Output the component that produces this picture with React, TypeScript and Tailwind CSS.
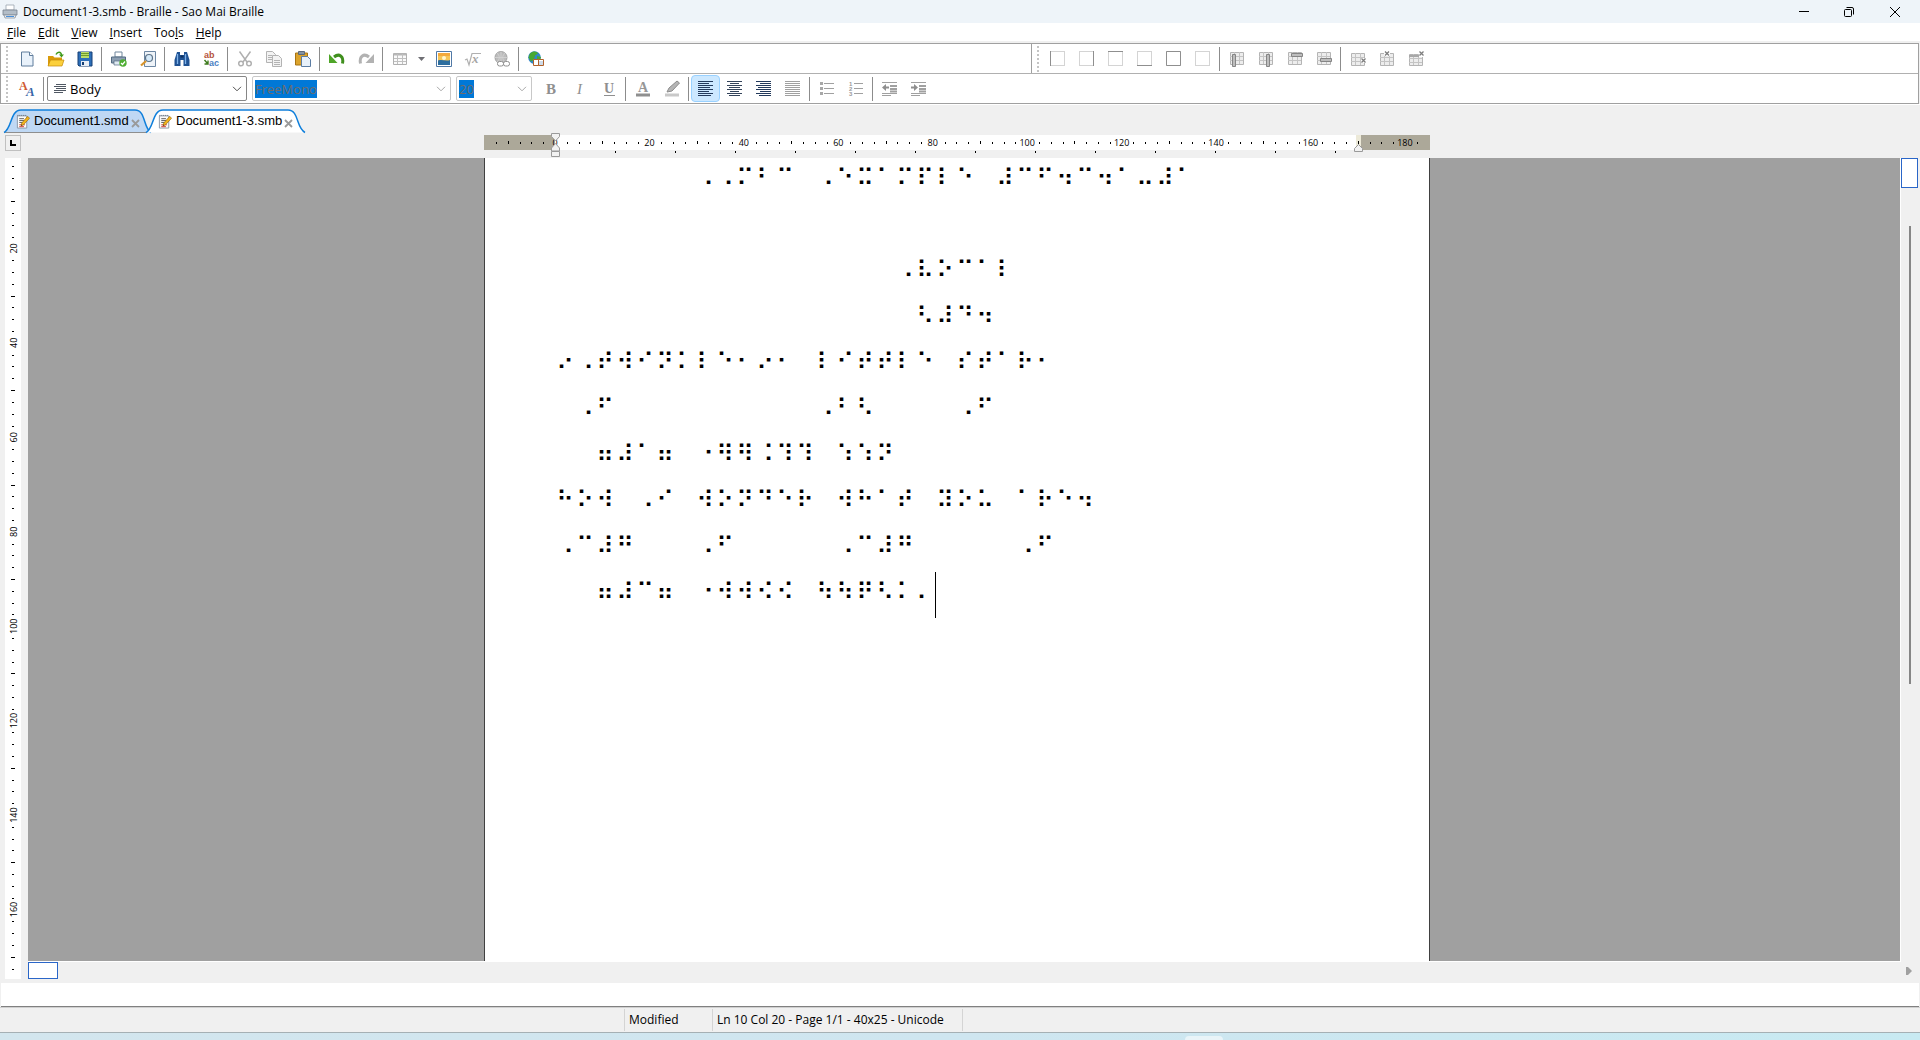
import { ReactNode } from 'react';
import { clsx } from 'clsx';

const MENUS = ['File', 'Edit', 'View', 'Insert', 'Tools', 'Help'];
const ACCESS_KEYS = [0, 0, 0, 0, 3, 0];

const BRAILLE_LINES = [
  '       ⠠⠠⠍⠃⠉ ⠠⠑⠭⠁⠍⠏⠇⠑ ⠼⠉⠋⠲⠉⠲⠁⠤⠼⠁',
  '',
  '                 ⠠⠧⠕⠉⠁⠇',
  '                  ⠣⠼⠙⠲',
  '⠔⠠⠞⠺⠊⠝⠅⠇⠑⠂⠔⠂ ⠇⠊⠞⠞⠇⠑ ⠎⠞⠁⠗⠂',
  ' ⠠⠋          ⠠⠃⠣    ⠠⠋',
  '  ⠶⠼⠁⠶ ⠐⠻⠻⠨⠹⠹ ⠱⠱⠝',
  '⠓⠕⠺ ⠠⠊ ⠺⠕⠝⠙⠑⠗ ⠺⠓⠁⠞ ⠽⠕⠥ ⠁⠗⠑⠲',
  '⠠⠉⠼⠛   ⠠⠋     ⠠⠉⠼⠛     ⠠⠋',
  '  ⠶⠼⠉⠶ ⠐⠺⠺⠪⠪ ⠳⠳⠟⠣⠅⠄',
];

function Icon({ children }: { children: ReactNode }) {
  return (
    <svg viewBox="0 0 16 16" className="size-4 overflow-visible" aria-hidden="true">
      {children}
    </svg>
  );
}

function ToolButton({
  label,
  active,
  children,
}: {
  label: string;
  active?: boolean;
  children: ReactNode;
}) {
  return (
    <button
      type="button"
      aria-label={label}
      className={clsx(
        'flex h-[27px] w-[29px] shrink-0 items-center justify-center',
        active && 'rounded-sm border border-[#99d1ff] bg-[#cce8ff]'
      )}
    >
      <Icon>{children}</Icon>
    </button>
  );
}

function Separator() {
  return (
    <div className="flex h-6 w-[5px] shrink-0 justify-center">
      <div className="w-px bg-[#8c8c8c]" />
    </div>
  );
}

function Grip() {
  return (
    <div className="flex w-[11px] shrink-0 justify-center">
      <div className="h-[26px] border-l-2 border-dotted border-[#c4c4c4]" />
    </div>
  );
}

function Combo({
  label,
  value,
  className,
  disabled,
  icon,
}: {
  label: string;
  value: string;
  className: string;
  disabled?: boolean;
  icon?: ReactNode;
}) {
  return (
    <div
      className={clsx(
        'relative flex h-[25px] shrink-0 items-center rounded-xs border bg-white',
        disabled ? 'border-[#c8c8c8]' : 'border-[#868686]',
        className
      )}
    >
      {icon}
      <span
        aria-hidden="true"
        className={clsx(
          'text-[13px] leading-[18px]',
          disabled ? 'ml-0.5 bg-[#0078d7] text-[#6d6d6d]' : 'ml-1'
        )}
      >
        {value}
      </span>
      <svg
        viewBox="0 0 10 6"
        className="mr-1 ml-auto h-1.5 w-2.5"
        fill="none"
        stroke={disabled ? '#a8a8a8' : '#505050'}
      >
        <path d="M1 .8l4 4 4-4" />
      </svg>
      <select
        aria-label={label}
        disabled={disabled}
        className="absolute inset-0 opacity-0"
      >
        <option>{value}</option>
      </select>
    </div>
  );
}

function TextLines({ rows, color }: { rows: number[][]; color: string }) {
  return (
    <g stroke={color} strokeWidth="1">
      {rows.map(([x1, x2], i) => (
        <path key={i} d={`M${x1} ${i * 2 + 0.5}H${x2}`} />
      ))}
    </g>
  );
}

function CellBorderIcon({ side }: { side: string }) {
  const sides: Record<string, string> = {
    left: 'M.5 0v15',
    right: 'M14.5 0v15',
    top: 'M0 .5h15',
    bottom: 'M0 14.5h15',
    all: 'M.5.5h14v14H.5z',
    none: '',
  };
  return (
    <g fill="none">
      <path d="M.5.5h14v14H.5z" stroke="#a8a8a8" strokeDasharray="1 1" />
      <path d={sides[side]} stroke="#8f8f8f" />
    </g>
  );
}

function TableGrid({ y = 1, h = 12 }: { y?: number; h?: number }) {
  return (
    <g>
      <path d={`M1.5 ${y + 0.5}h13v${h}h-13z`} fill="#ededed" stroke="#b4b4b4" />
      <path
        d={`M5.5 ${y}v${h}M10.5 ${y}v${h}M1 ${y + 4.5}h13M1 ${y + 8.5}h13`}
        stroke="#c4c4c4"
        fill="none"
      />
    </g>
  );
}

const DeleteMark = ({ x, y }: { x: number; y: number }) => (
  <path
    d={`M${x} ${y}l4 4m0-4l-4 4`}
    stroke="#7d7d7d"
    strokeWidth="1.3"
    fill="none"
  />
);

function DocumentIcon() {
  return (
    <svg viewBox="0 0 14 16" className="h-[15px] w-3.5 shrink-0">
      <path d="M1 2h10v13H1z" fill="#fbfbfb" stroke="#8a96a5" />
      <path d="M1 1.5h10" stroke="#6a7480" strokeDasharray="1 1" />
      <path d="M3 5h5M3 7h6M3 9h4" stroke="#555" />
      <path d="M3 11.5h6M3 13.5h5" stroke="#d0342c" />
      <path d="M12 2.5l2 2-6.5 7-2.5 1 .6-2.8z" fill="#f2b51d" stroke="#9a6a10" strokeWidth=".7" />
      <path d="M5 12.5l.4-1.4.9.8z" fill="#222" />
    </svg>
  );
}

function Tab({
  name,
  active,
  className,
  outline,
}: {
  name: string;
  active?: boolean;
  className: string;
  outline: string;
}) {
  return (
    <div className={clsx('relative flex h-6 shrink-0 items-center pl-3', className)}>
      <svg className="absolute inset-0 size-full overflow-visible" aria-hidden="true">
        <path d={outline} fill={active ? '#fff' : '#bfd8f4'} />
        {!active && <path d="M0 23.5h142" stroke="#8e8e8e" />}
        <path d={outline} fill="none" stroke="#0f7fdb" strokeWidth="1.5" />
      </svg>
      <button
        type="button"
        role="tab"
        aria-selected={!!active}
        className="relative flex items-center gap-1 font-['Liberation_Sans',Arial,sans-serif] text-[13px] leading-4"
      >
        <DocumentIcon />
        {name}
      </button>
      <button type="button" aria-label={`Close ${name}`} className="relative mt-1 ml-0.5">
        <svg viewBox="0 0 9 9" className="size-[9px]">
          <path d="M1 1l7 7M8 1L1 8" stroke="#9a9a9a" strokeWidth="1.8" />
        </svg>
      </button>
    </div>
  );
}

const UNIT = 4.722;

function HorizontalRuler() {
  const ticks = Array.from({ length: 80 }, (_, i) => i - 5).filter(
    (i) => i <= 73 && (i % 8 !== 0 || i < 0)
  );
  return (
    <svg
      viewBox="0 0 946 28"
      className="h-7 w-[946px]"
      fontFamily="'Open Sans', sans-serif"
      fontSize="9"
      textAnchor="middle"
    >
      <path d="M0 5h946v15H0z" fill="#fff" />
      <path d="M0 5h71v15H0z" fill="#aca899" />
      <path d="M872 5h5v15h-5z" fill="#ece9d8" />
      <path d="M877 5h69v15h-69z" fill="#aca899" />
      {ticks.map((i) => (
        <rect
          key={i}
          x={Math.round(71 + i * 2.5 * UNIT)}
          y={i % 4 === 0 ? 11 : 12}
          width="1"
          height={i % 4 === 0 ? 3 : 2}
        />
      ))}
      {Array.from({ length: 10 }, (_, i) => (
        <text key={i} x={71 + i * 20 * UNIT} y="16">
          {i * 20}
        </text>
      ))}
      {Array.from({ length: 13 }, (_, i) => (
        <rect key={i} x={131 + i * 60} y="21" width="1" height="2" />
      ))}
      <g fill="#f2f2f2" stroke="#9a9a9a">
        <path d="M67.500 3.500h8v3l-4 4.500-4-4.500z" />
        <path d="M71.500 13.500l4 4.500v3h-8v-3z" />
        <path d="M67.500 21.500h8v5h-8z" />
        <path d="M874.500 14.500l4 4v3h-8v-3z" />
      </g>
    </svg>
  );
}

function VerticalRuler() {
  const ticks = Array.from({ length: 69 }, (_, i) => i + 1).filter((i) => i % 8 !== 0);
  return (
    <svg
      className="mr-[7px] ml-[5px] h-full w-4 bg-white"
      fontFamily="'Open Sans', sans-serif"
      fontSize="9"
      textAnchor="middle"
    >
      {ticks.map((i) => (
        <rect
          key={i}
          x={i % 4 === 0 ? 6 : 7}
          y={Math.round(-4 + i * 2.5 * UNIT)}
          width={i % 4 === 0 ? 4 : 2}
          height="1"
        />
      ))}
      {Array.from({ length: 8 }, (_, i) => (
        <text
          key={i}
          transform={`translate(11.500 ${-4 + (i + 1) * 20 * UNIT}) rotate(-90)`}
        >
          {(i + 1) * 20}
        </text>
      ))}
    </svg>
  );
}

function TitleBar() {
  return (
    <header className="flex h-[23px] shrink-0 items-center bg-[#eef4f9] pr-0.5 pl-0.5">
      <Icon>
        <path d="M4 1h8v5H4z" fill="#fff" stroke="#9aa4ae" strokeWidth=".8" />
        <path d="M1 6h14v5H1z" fill="#b3bdc7" stroke="#77828e" strokeWidth=".8" />
        <path d="M2 11h12l-1 3H3z" fill="#e8ecf0" stroke="#8c96a0" strokeWidth=".8" />
        <path d="M4 12.500h8" stroke="#4a90d9" />
      </Icon>
      <h1 className="ml-[5px] text-xs">Document1-3.smb - Braille - Sao Mai Braille</h1>
      <div className="ml-auto flex h-full">
        <button type="button" aria-label="Minimize" className="flex w-[45px] items-center justify-center">
          <svg viewBox="0 0 10 10" className="size-2.5">
            <path d="M0 4.500h10" stroke="#000" />
          </svg>
        </button>
        <button type="button" aria-label="Restore" className="flex w-[45px] items-center justify-center">
          <svg viewBox="0 0 10 10" className="size-2.5" fill="none" stroke="#000">
            <rect x=".5" y="2.500" width="7" height="7" rx="1" />
            <path d="M2.500.5H8a1.500 1.500 0 0 1 1.500 1.500v5.500" />
          </svg>
        </button>
        <button type="button" aria-label="Close" className="flex w-[47px] items-center justify-center">
          <svg viewBox="0 0 10 10" className="size-2.5">
            <path d="M0 0l10 10M10 0L0 10" stroke="#000" />
          </svg>
        </button>
      </div>
    </header>
  );
}

function StandardToolbar() {
  return (
    <div role="toolbar" aria-label="Standard" className="flex w-[1031px] shrink-0 items-center border-r border-[#a0a0a0]">
      <Grip />
      <ToolButton label="New">
        <path d="M2.500 1h8l3.500 3.500V15h-11.500z" fill="#e9f2fb" stroke="#5f7d9c" />
        <path d="M10.500 1v3.500H14" fill="#fff" stroke="#5f7d9c" />
      </ToolButton>
      <ToolButton label="Open">
        <path d="M0 5h5l1.500 1.500H14V15H0z" fill="#d99a0b" />
        <path d="M2.500 9H16l-2 6H0z" fill="#fbd03c" stroke="#c58a08" strokeWidth=".7" />
        <path d="M8 3.500C9.500.5 13 .5 13.500 4" fill="none" stroke="#3f9a1c" strokeWidth="1.500" />
        <path d="M11 3.500h5l-2.500 3z" fill="#3f9a1c" />
      </ToolButton>
      <ToolButton label="Save">
        <path d="M1 1h14v14H2l-1-1z" fill="#2d6fb8" stroke="#163f74" />
        <path d="M4 1h8v6H4z" fill="#b9dc6a" />
        <path d="M4 2.500h8M4 4.500h8" stroke="#6f9a2c" />
        <path d="M4 10h8v5H4z" fill="#e8eef5" />
        <path d="M5 11h2v3H5z" fill="#163f74" />
      </ToolButton>
      <Separator />
      <ToolButton label="Print">
        <path d="M4 1h7v5H4z" fill="#fff" stroke="#71879d" />
        <path d="M.5 6h14v6H.5z" fill="#8d9fb2" stroke="#536a82" />
        <path d="M3 10h8v4H3z" fill="#dfe9f2" stroke="#536a82" strokeWidth=".7" />
        <circle cx="12" cy="12" r="3.700" fill="#4fae32" />
        <path d="M10 12l1.500 1.500 2.500-3" fill="none" stroke="#fff" strokeWidth="1.200" />
      </ToolButton>
      <ToolButton label="Print Preview">
        <path d="M4.500.5h11v15h-11z" fill="#eef3f8" stroke="#6d87a3" />
        <circle cx="9" cy="7" r="3.500" fill="#d6eaf9" stroke="#5d7388" strokeWidth="1.200" />
        <path d="M6 10L1 14.500" stroke="#d8942a" strokeWidth="2.200" />
      </ToolButton>
      <Separator />
      <ToolButton label="Find">
        <path d="M3 1h3v3h4V1h3l2.500 8v6H9.500V9h-3v6H.5V9z" fill="#1f5293" />
        <path d="M3.500 3v10M11.500 3v10" stroke="#7fb2e8" strokeWidth="1.300" />
        <path d="M6.500 5.500h3" stroke="#0d2f5c" strokeWidth="2" />
      </ToolButton>
      <ToolButton label="Replace">
        <text x="1" y="7" fontSize="9" fontWeight="bold" fill="#b5533c" fontFamily="'Liberation Sans', Arial, sans-serif">ab</text>
        <text x="6" y="15" fontSize="9" fontWeight="bold" fill="#4a7fc4" fontFamily="'Liberation Sans', Arial, sans-serif">ac</text>
        <path d="M1.500 9l3 3.500M5 9.500v3.500H1.500" stroke="#3d7a1c" strokeWidth="1.400" fill="none" />
      </ToolButton>
      <Separator />
      <ToolButton label="Cut">
        <g fill="none" stroke="#b0b0b0" strokeWidth="1.500">
          <path d="M2.500.5L10 11M13.500.5L6 11" />
          <circle cx="4" cy="12.500" r="2.300" />
          <circle cx="12" cy="12.500" r="2.300" />
        </g>
      </ToolButton>
      <ToolButton label="Copy">
        <g fill="#f3f3f3" stroke="#b3b3b3">
          <path d="M.5.5h6l3 3v8h-9z" />
          <path d="M6.500 4.500h6l3 3v8h-9z" />
          <path d="M2 4.500h4M2 6.500h4M2 8.500h4M8 9.500h6M8 11.500h6M8 13.500h6" />
        </g>
      </ToolButton>
      <ToolButton label="Paste">
        <path d="M.5 2h12v12H.5z" fill="#dba32c" stroke="#a87413" />
        <path d="M3.500.5h6v3h-6z" fill="#8594a5" stroke="#5c6a7a" />
        <path d="M6.500 5.500h6l3 3v7h-9z" fill="#e8f1fa" stroke="#5c7da3" />
      </ToolButton>
      <Separator />
      <ToolButton label="Undo">
        <path d="M5 6c5-4 10-1 8.500 6.500" fill="none" stroke="#3f8f1d" strokeWidth="3" />
        <path d="M0 3v9h8.500z" fill="#4fa528" />
      </ToolButton>
      <ToolButton label="Redo">
        <path d="M11 6C6 2 1 5 2.500 12.500" fill="none" stroke="#b2b2b2" strokeWidth="3" />
        <path d="M16 3v9H7.500z" fill="#b2b2b2" />
      </ToolButton>
      <Separator />
      <ToolButton label="Insert Table">
        <path d="M1.500 2.500h13v11h-13z" fill="#fafafa" stroke="#b0b0b0" />
        <path d="M2 3.500h12" stroke="#b8b8b8" strokeWidth="2" />
        <path d="M5.500 3v10M10.500 3v10M2 7.500h12M2 10.500h12" stroke="#c0c0c0" />
      </ToolButton>
      <button type="button" aria-label="Table options" className="flex w-[15px] justify-center">
        <svg viewBox="0 0 7 4" className="h-1 w-[7px]">
          <path d="M0 0h7L3.500 4z" fill="#6f6f74" />
        </svg>
      </button>
      <ToolButton label="Insert Picture">
        <path d="M.5.5h15v15H.5z" fill="#fff" stroke="#5179a6" />
        <path d="M2 2h12v12H2z" fill="#f5c557" />
        <path d="M2 2h12v3H2z" fill="#f3a93c" />
        <circle cx="8" cy="7" r="2" fill="#fff6cf" />
        <path d="M2 9.500c4-1.500 8 1 12-.5V14H2z" fill="#2d6e9f" />
      </ToolButton>
      <ToolButton label="Insert Equation">
        <path d="M0 9l2-1 2 6L7 2.500h9" fill="none" stroke="#b0b0b0" strokeWidth="1.200" />
        <text x="7" y="12" fontSize="13" fontWeight="bold" fontStyle="italic" fill="#a6a6a6" fontFamily="'Liberation Serif', serif">x</text>
      </ToolButton>
      <ToolButton label="Insert Link">
        <circle cx="7" cy="6.500" r="6" fill="#bcbcbc" stroke="#a3a3a3" />
        <path d="M1 6.500h12M7 .5v12M3 2c3 3 3 6 0 9M11 2c-3 3-3 6 0 9" stroke="#d5d5d5" fill="none" strokeWidth=".8" />
        <rect x="3.500" y="10.500" width="6" height="4.500" rx="2" fill="#fff" stroke="#8f8f8f" />
        <rect x="9.500" y="10.500" width="6" height="4.500" rx="2" fill="#fff" stroke="#8f8f8f" />
      </ToolButton>
      <Separator />
      <ToolButton label="Translate">
        <circle cx="6.500" cy="6.500" r="6.300" fill="#2f86c9" />
        <path d="M2 2.500c3-3 7-2.500 8 0l-3 2-1 4-3 2-2.500-4z" fill="#46a832" />
        <path d="M9 5l4 1-1 3-3-1z" fill="#46a832" />
        <path d="M5.500 8.500h5v6h-5zM10.500 8.500h5v6h-5z" fill="#fff" stroke="#b0622b" />
        <path d="M12 10v4M14 10v4" stroke="#9db7d4" />
      </ToolButton>
    </div>
  );
}

function TableToolbar() {
  return (
    <div role="toolbar" aria-label="Table" className="flex items-center">
      <Grip />
      {['left', 'right', 'top', 'bottom', 'all', 'none'].map((side) => (
        <ToolButton key={side} label={`Border ${side}`}>
          <CellBorderIcon side={side} />
        </ToolButton>
      ))}
      <Separator />
      <ToolButton label="Insert Column Before">
        <TableGrid />
        <path d="M3.500 3.500h3v12h-3z" fill="#bdbdbd" stroke="#858585" />
      </ToolButton>
      <ToolButton label="Insert Column After">
        <TableGrid />
        <path d="M8.500 3.500h3v12h-3z" fill="#bdbdbd" stroke="#858585" />
      </ToolButton>
      <ToolButton label="Insert Row Above">
        <TableGrid />
        <path d="M4.500 2.500h11v3h-11z" fill="#bdbdbd" stroke="#858585" />
      </ToolButton>
      <ToolButton label="Insert Row Below">
        <TableGrid />
        <path d="M4.500 7.500h11v3h-11z" fill="#bdbdbd" stroke="#858585" />
      </ToolButton>
      <Separator />
      <ToolButton label="Delete Row">
        <TableGrid y={2} />
        <path d="M11 7h5v5h-5z" fill="#fff" />
        <DeleteMark x={11.5} y={7.5} />
      </ToolButton>
      <ToolButton label="Delete Column">
        <TableGrid y={2} />
        <path d="M5 0h6v5H5z" fill="#fff" />
        <DeleteMark x={6} y={0.5} />
      </ToolButton>
      <ToolButton label="Delete Table">
        <TableGrid y={3} h={11} />
        <path d="M1 4h10v2H1z" fill="#a8a8a8" />
        <path d="M11 0h5v6h-5z" fill="#fff" />
        <DeleteMark x={11.5} y={0.5} />
      </ToolButton>
    </div>
  );
}

const JUSTIFY = Array.from({ length: 8 }, () => [0, 15]);
const LEFT = [[0, 15], [0, 11], [0, 15], [0, 12], [0, 15], [0, 11], [0, 15], [0, 13]];
const CENTER = [[0, 15], [3, 12], [0, 15], [2, 13], [0, 15], [3, 12], [0, 15], [2, 13]];
const RIGHT = [[0, 15], [4, 15], [0, 15], [2, 15], [0, 15], [4, 15], [0, 15], [3, 15]];

function FormatToolbar() {
  return (
    <div role="toolbar" aria-label="Formatting" className="flex h-[30px] items-center border-t border-[#b0b0b0]">
      <Grip />
      <ToolButton label="Character">
        <text x="0" y="9" fontSize="12" fontWeight="bold" fill="#cf5a33" fontFamily="'Liberation Serif', serif">A</text>
        <text x="7" y="15" fontSize="13" fontWeight="bold" fontStyle="italic" fill="#3a66a8" fontFamily="'Liberation Serif', serif">A</text>
      </ToolButton>
      <Separator />
      <Combo
        label="Style"
        value="Body"
        className="ml-px w-[200px]"
        icon={
          <svg viewBox="0 0 12 9" className="ml-1.5 h-[9px] w-3">
            <path d="M2 .5h10M0 2.500h12M2 4.500h10M0 6.500h12M0 8.500h9" stroke="#505863" />
          </svg>
        }
      />
      <Combo label="Font" value="FreeMono" className="ml-[5px] w-[199px]" disabled />
      <Combo label="Font size" value="20" className="mr-1 ml-[5px] w-[76px]" disabled />
      <ToolButton label="Bold">
        <text x="3" y="13" fontSize="15" fontWeight="bold" fill="#8f8f8f" fontFamily="'Liberation Serif', serif">B</text>
      </ToolButton>
      <ToolButton label="Italic">
        <text x="5" y="13" fontSize="15" fontStyle="italic" fill="#8f8f8f" fontFamily="'Liberation Serif', serif">I</text>
      </ToolButton>
      <ToolButton label="Underline">
        <text x="3" y="12" fontSize="14" fontWeight="bold" fill="#8f8f8f" fontFamily="'Liberation Serif', serif">U</text>
        <path d="M3 14.500h11" stroke="#8f8f8f" />
      </ToolButton>
      <Separator />
      <ToolButton label="Font Color">
        <text x="3" y="11" fontSize="14" fontWeight="bold" fill="#979797" fontFamily="'Liberation Serif', serif">A</text>
        <path d="M1 12.500h14v3H1z" fill="#8f8f8f" />
      </ToolButton>
      <ToolButton label="Highlight">
        <path d="M3 11l2-4 8-7 2.500 2-7.500 8z" fill="#b5b5b5" stroke="#8c8c8c" />
        <path d="M1 12.500h14v3H1z" fill="#c9c9c9" />
      </ToolButton>
      <Separator />
      <ToolButton label="Align Left" active>
        <TextLines rows={LEFT} color="#233a5c" />
      </ToolButton>
      <ToolButton label="Center">
        <TextLines rows={CENTER} color="#33435a" />
      </ToolButton>
      <ToolButton label="Align Right">
        <TextLines rows={RIGHT} color="#233a5c" />
      </ToolButton>
      <ToolButton label="Justify">
        <TextLines rows={JUSTIFY} color="#a0a0a0" />
      </ToolButton>
      <Separator />
      <ToolButton label="Bullets">
        <path d="M5 2.500h10M5 7.500h10M5 12.500h10" stroke="#a0a0a0" />
        <path d="M1 1h3v3H1zM1 6h3v3H1zM1 11h3v3H1z" fill="#a8a8a8" />
      </ToolButton>
      <ToolButton label="Numbering">
        <path d="M6 2.500h9M6 7.500h9M6 12.500h9" stroke="#a0a0a0" />
        <g fontSize="6" fontWeight="bold" fill="#9a9a9a" fontFamily="'Liberation Sans', Arial, sans-serif">
          <text x="1" y="5">1</text>
          <text x="1" y="10">2</text>
          <text x="1" y="15">3</text>
        </g>
      </ToolButton>
      <Separator />
      <ToolButton label="Decrease Indent">
        <path d="M0 1.500h15M0 12.500h15M0 14.500h9" stroke="#a0a0a0" />
        <path d="M8 5h7M8 8h7M8 10.500h7" stroke="#a0a0a0" strokeWidth="2" />
        <path d="M0 6.500L4 3v2.500h3v2H4V10z" fill="#8f8f8f" />
      </ToolButton>
      <ToolButton label="Increase Indent">
        <path d="M0 1.500h15M0 12.500h15M0 14.500h9" stroke="#a0a0a0" />
        <path d="M8 5h7M8 8h7M8 10.500h7" stroke="#a0a0a0" strokeWidth="2" />
        <path d="M7 6.500L3 3v2.500H0v2h3V10z" fill="#8f8f8f" />
      </ToolButton>
    </div>
  );
}

function BraillePage() {
  return (
    <article className="w-[946px] shrink-0 border-x border-[#404040] bg-white pl-[70px] text-black">
      {BRAILLE_LINES.map((line, row) => (
        <p key={row} className="flex h-[46px] items-start font-['DejaVu_Sans',sans-serif] text-2xl leading-10">
          {[...line].map((cell, col) => (
            <span key={col} className="w-5 text-center whitespace-pre">
              {cell}
            </span>
          ))}
          {row === BRAILLE_LINES.length - 1 && <span className="h-full w-px bg-black" />}
        </p>
      ))}
    </article>
  );
}

export default function App() {
  return (
    <div className="flex h-screen flex-col overflow-hidden bg-[#f0f0f0] font-['Open_Sans','Noto_Sans',sans-serif] text-black">
      <TitleBar />
      <nav className="flex h-[18px] shrink-0 items-center gap-3 bg-white pt-0.5 pl-[7px] text-xs leading-4">
        {MENUS.map((menu, i) => (
          <button key={menu} type="button">
            {menu.slice(0, ACCESS_KEYS[i])}
            <span className="underline">{menu[ACCESS_KEYS[i]]}</span>
            {menu.slice(ACCESS_KEYS[i] + 1)}
          </button>
        ))}
      </nav>

      <div className="mt-0.5 mr-px shrink-0 border border-[#a0a0a0] bg-white">
        <div className="flex h-[29px]">
          <StandardToolbar />
          <TableToolbar />
        </div>
        <FormatToolbar />
      </div>

      <div role="tablist" className="flex h-[31px] shrink-0 items-start border-t border-white pt-1 pl-1">
        <Tab
          name="Document1.smd"
          className="w-[142px]"
          outline="M0 23.500C8 20 6 1 17 1h114c11 0 8 18 16 22.500"
        />
        <Tab
          name="Document1-3.smb"
          active
          className="w-[160px]"
          outline="M0 23.500C8 20 6 1 17 1h125c11 0 8 18 17 22.500"
        />
      </div>

      <div className="flex h-[23px] shrink-0">
        <div className="ml-[5px] size-4 shrink-0 border border-[#c0c0c0] p-1">
          <div className="size-[6px] border-b-2 border-l-2 border-black" />
        </div>
        <div className="-mt-[5px] mr-5 ml-[7px] flex h-7 grow justify-center pr-[14px]">
          <HorizontalRuler />
        </div>
      </div>

      <div className="flex min-h-0 grow">
        <VerticalRuler />
        <div className="flex min-w-0 grow flex-col">
          <div className="flex min-h-0 grow">
            <main className="flex grow justify-center overflow-hidden border-r border-b border-white bg-[#a0a0a0] pr-[14px]">
              <BraillePage />
            </main>
            <div className="flex w-[19px] shrink-0 flex-col">
              <div className="h-[30px] w-[17px] border border-[#2a66c8] bg-white" />
              <div className="mt-[38px] ml-2 h-[57%] w-0.5 bg-[#868686]" />
            </div>
          </div>
          <div className="flex h-[17px] shrink-0 items-center">
            <div className="h-full w-[30px] border border-[#2a66c8] bg-white" />
            <svg viewBox="0 0 6 8" className="mr-2 ml-auto h-2 w-1.5">
              <path d="M0 0h2l4 4-4 4H0z" fill="#a0a0a0" />
            </svg>
          </div>
        </div>
      </div>

      <div className="mt-1 mr-px ml-px h-6 shrink-0 border-b border-[#808080] bg-white" />
      <footer className="flex h-[26px] shrink-0 items-center border-t border-b border-t-[#d0d0d0] border-b-[#a5b0b4] text-xs">
        <div className="flex h-[22px] w-[625px] items-center border-r border-[#d4d4d4]" />
        <div className="flex h-[22px] w-[88px] items-center border-r border-[#d4d4d4] pl-1">Modified</div>
        <div className="flex h-[22px] w-[250px] items-center border-r border-[#d4d4d4] pl-1">
          Ln 10 Col 20 - Page 1/1 - 40x25 - Unicode
        </div>
      </footer>
      <div className="flex h-[7px] shrink-0 items-end bg-linear-to-r from-[#d3e6ee] via-[#cfe6f0] to-[#c8eaf2]">
        <div className="ml-[1185px] h-1 w-[38px] rounded-t bg-[#e9f4f8]" />
      </div>
    </div>
  );
}
